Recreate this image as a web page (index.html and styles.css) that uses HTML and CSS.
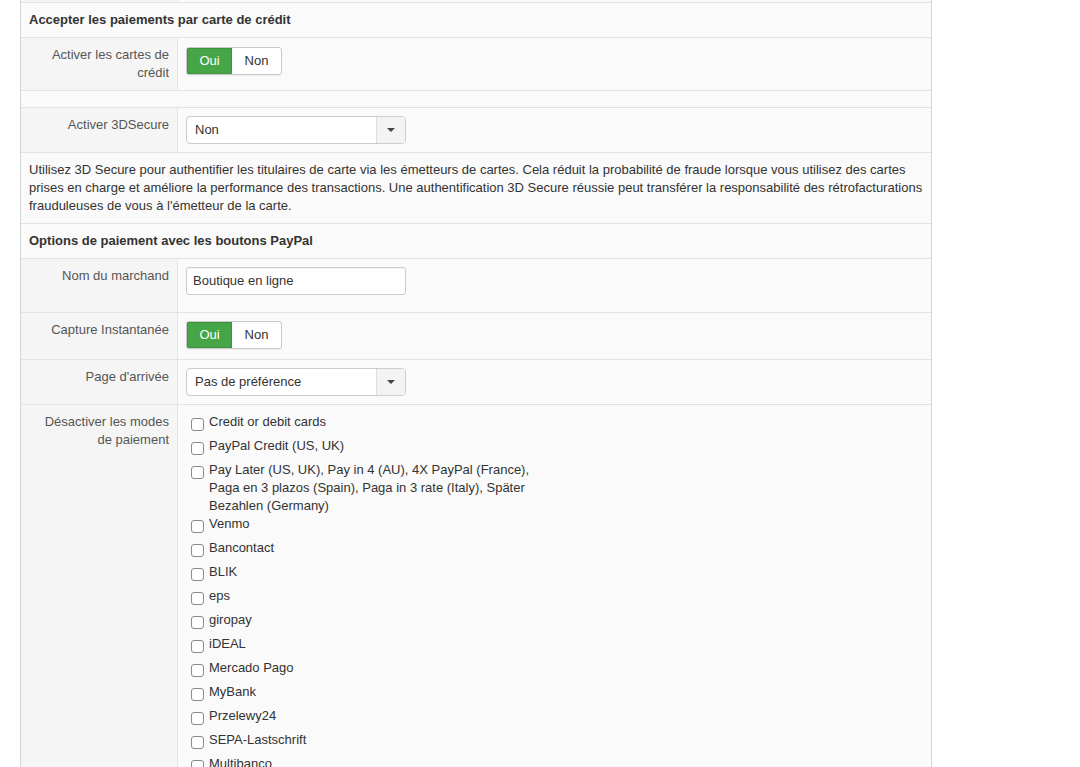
FILE: index.html
```html
<!DOCTYPE html>
<html lang="fr">
<head>
<meta charset="utf-8">
<title>Paramètres PayPal</title>
<link rel="stylesheet" href="styles.css">
</head>
<body>
<div class="panel">
  <div class="row row-stub"><div class="key"></div><div class="val"></div></div>

  <div class="section-title">Accepter les paiements par carte de crédit</div>

  <div class="row">
    <div class="key">Activer les cartes de crédit</div>
    <div class="val">
      <div class="toggle toggle-tight"><span class="opt opt-yes">Oui</span><span class="opt opt-no">Non</span></div>
    </div>
  </div>

  <div class="spacer"></div>

  <div class="row">
    <div class="key">Activer 3DSecure</div>
    <div class="val">
      <div class="select"><span class="select-value">Non</span><span class="select-arrow"><span class="caret"></span></span></div>
    </div>
  </div>

  <div class="note">Utilisez 3D Secure pour authentifier les titulaires de carte via les émetteurs de cartes. Cela réduit la probabilité de fraude lorsque vous utilisez des cartes prises en charge et améliore la performance des transactions. Une authentification 3D Secure réussie peut transférer la responsabilité des rétrofacturations frauduleuses de vous à l'émetteur de la carte.</div>

  <div class="section-title">Options de paiement avec les boutons PayPal</div>

  <div class="row">
    <div class="key">Nom du marchand</div>
    <div class="val">
      <div class="text-input">Boutique en ligne</div>
    </div>
  </div>

  <div class="row">
    <div class="key">Capture Instantanée</div>
    <div class="val">
      <div class="toggle"><span class="opt opt-yes">Oui</span><span class="opt opt-no">Non</span></div>
    </div>
  </div>

  <div class="row">
    <div class="key">Page d'arrivée</div>
    <div class="val">
      <div class="select"><span class="select-value">Pas de préférence</span><span class="select-arrow"><span class="caret"></span></span></div>
    </div>
  </div>

  <div class="row row-last">
    <div class="key">Désactiver les modes de paiement</div>
    <div class="val">
      <ul class="checklist">
        <li><input type="checkbox"><span>Credit or debit cards</span></li>
        <li><input type="checkbox"><span>PayPal Credit (US, UK)</span></li>
        <li><input type="checkbox"><span>Pay Later (US, UK), Pay in 4 (AU), 4X PayPal (France), Paga en 3 plazos (Spain), Paga in 3 rate (Italy), Später Bezahlen (Germany)</span></li>
        <li><input type="checkbox"><span>Venmo</span></li>
        <li><input type="checkbox"><span>Bancontact</span></li>
        <li><input type="checkbox"><span>BLIK</span></li>
        <li><input type="checkbox"><span>eps</span></li>
        <li><input type="checkbox"><span>giropay</span></li>
        <li><input type="checkbox"><span>iDEAL</span></li>
        <li><input type="checkbox"><span>Mercado Pago</span></li>
        <li><input type="checkbox"><span>MyBank</span></li>
        <li><input type="checkbox"><span>Przelewy24</span></li>
        <li><input type="checkbox"><span>SEPA-Lastschrift</span></li>
        <li><input type="checkbox"><span>Multibanco</span></li>
      </ul>
    </div>
  </div>
</div>
</body>
</html>
```
FILE: styles.css
```css
html, body {
  margin: 0;
  background: #fff;
}

body {
  font-family: "Liberation Sans", Arial, Helvetica, sans-serif;
  font-size: 13px;
  line-height: 18px;
  color: #333;
  height: 767px;
  overflow: hidden;
}

.panel {
  margin-left: 20px;
  width: 912px;
  box-sizing: border-box;
  border-left: 1px solid #d4d4d4;
  border-right: 1px solid #d4d4d4;
  background: #fafafa;
}

/* label / value rows */
.row {
  display: flex;
  border-bottom: 1px solid #e3e3e3;
}

.key {
  flex: none;
  width: 157px;
  box-sizing: border-box;
  padding: 8px;
  text-align: right;
  color: #555;
  background: #f5f5f5;
  border-right: 1px solid #e6e6e6;
}

.val {
  flex: 1;
  padding: 8px;
  min-width: 0;
}

.row-stub {
  height: 2px;
  overflow: hidden;
}

.row-stub .key,
.row-stub .val {
  padding: 0;
}

.row-last {
  border-bottom: 0;
}

.section-title {
  padding: 8px;
  font-weight: bold;
  color: #333;
  border-bottom: 1px solid #e3e3e3;
}

.spacer {
  height: 16px;
  border-bottom: 1px solid #e3e3e3;
}

.note {
  padding: 8px 4px 8px 8px;
  color: #333;
  border-bottom: 1px solid #e3e3e3;
}

/* Oui / Non switch */
.toggle {
  display: inline-flex;
  height: 28px;
  box-sizing: border-box;
  border: 1px solid #c9c9c9;
  border-radius: 3px;
  background: #fff;
  overflow: hidden;
  margin-bottom: 2px;
  box-shadow: 0 1px 1px rgba(0, 0, 0, 0.05);
}

.toggle-tight {
  margin-top: 1px;
}

.opt {
  display: block;
  line-height: 26px;
  text-align: center;
}

.opt-yes {
  width: 45px;
  background: #46a546;
  color: #fff;
  box-shadow: inset 0 0 0 1px #3e933e;
}

.opt-no {
  width: 49px;
  color: #333;
}

/* dropdown */
.select {
  display: flex;
  width: 220px;
  height: 28px;
  box-sizing: border-box;
  border: 1px solid #ccc;
  border-radius: 4px;
  background: #fff;
  overflow: hidden;
}

.select-value {
  flex: 1;
  padding: 0 8px;
  line-height: 26px;
  color: #333;
}

.select-arrow {
  flex: none;
  width: 28px;
  display: flex;
  align-items: center;
  justify-content: center;
  border-left: 1px solid #ddd;
  background: #f3f3f3;
}

.caret {
  width: 0;
  height: 0;
  border-top: 4px solid #444;
  border-left: 4px solid transparent;
  border-right: 4px solid transparent;
}

/* text field */
.text-input {
  width: 220px;
  height: 28px;
  box-sizing: border-box;
  padding: 0 6px;
  line-height: 26px;
  border: 1px solid #ccc;
  border-radius: 3px;
  background: #fff;
  box-shadow: inset 0 1px 1px rgba(0, 0, 0, 0.06);
  color: #333;
  margin-bottom: 9px;
}

/* payment method checkboxes */
.checklist {
  list-style: none;
  margin: 0;
  padding: 0;
  width: 350px;
}

.checklist li {
  display: flex;
  align-items: flex-start;
  min-height: 24px;
}

.checklist input {
  -webkit-appearance: none;
  appearance: none;
  flex: none;
  width: 13px;
  height: 13px;
  margin: 5px 5px 0 5px;
  box-sizing: border-box;
  border: 1px solid #8a8a8a;
  border-radius: 3px;
  background: #fff;
}
```
